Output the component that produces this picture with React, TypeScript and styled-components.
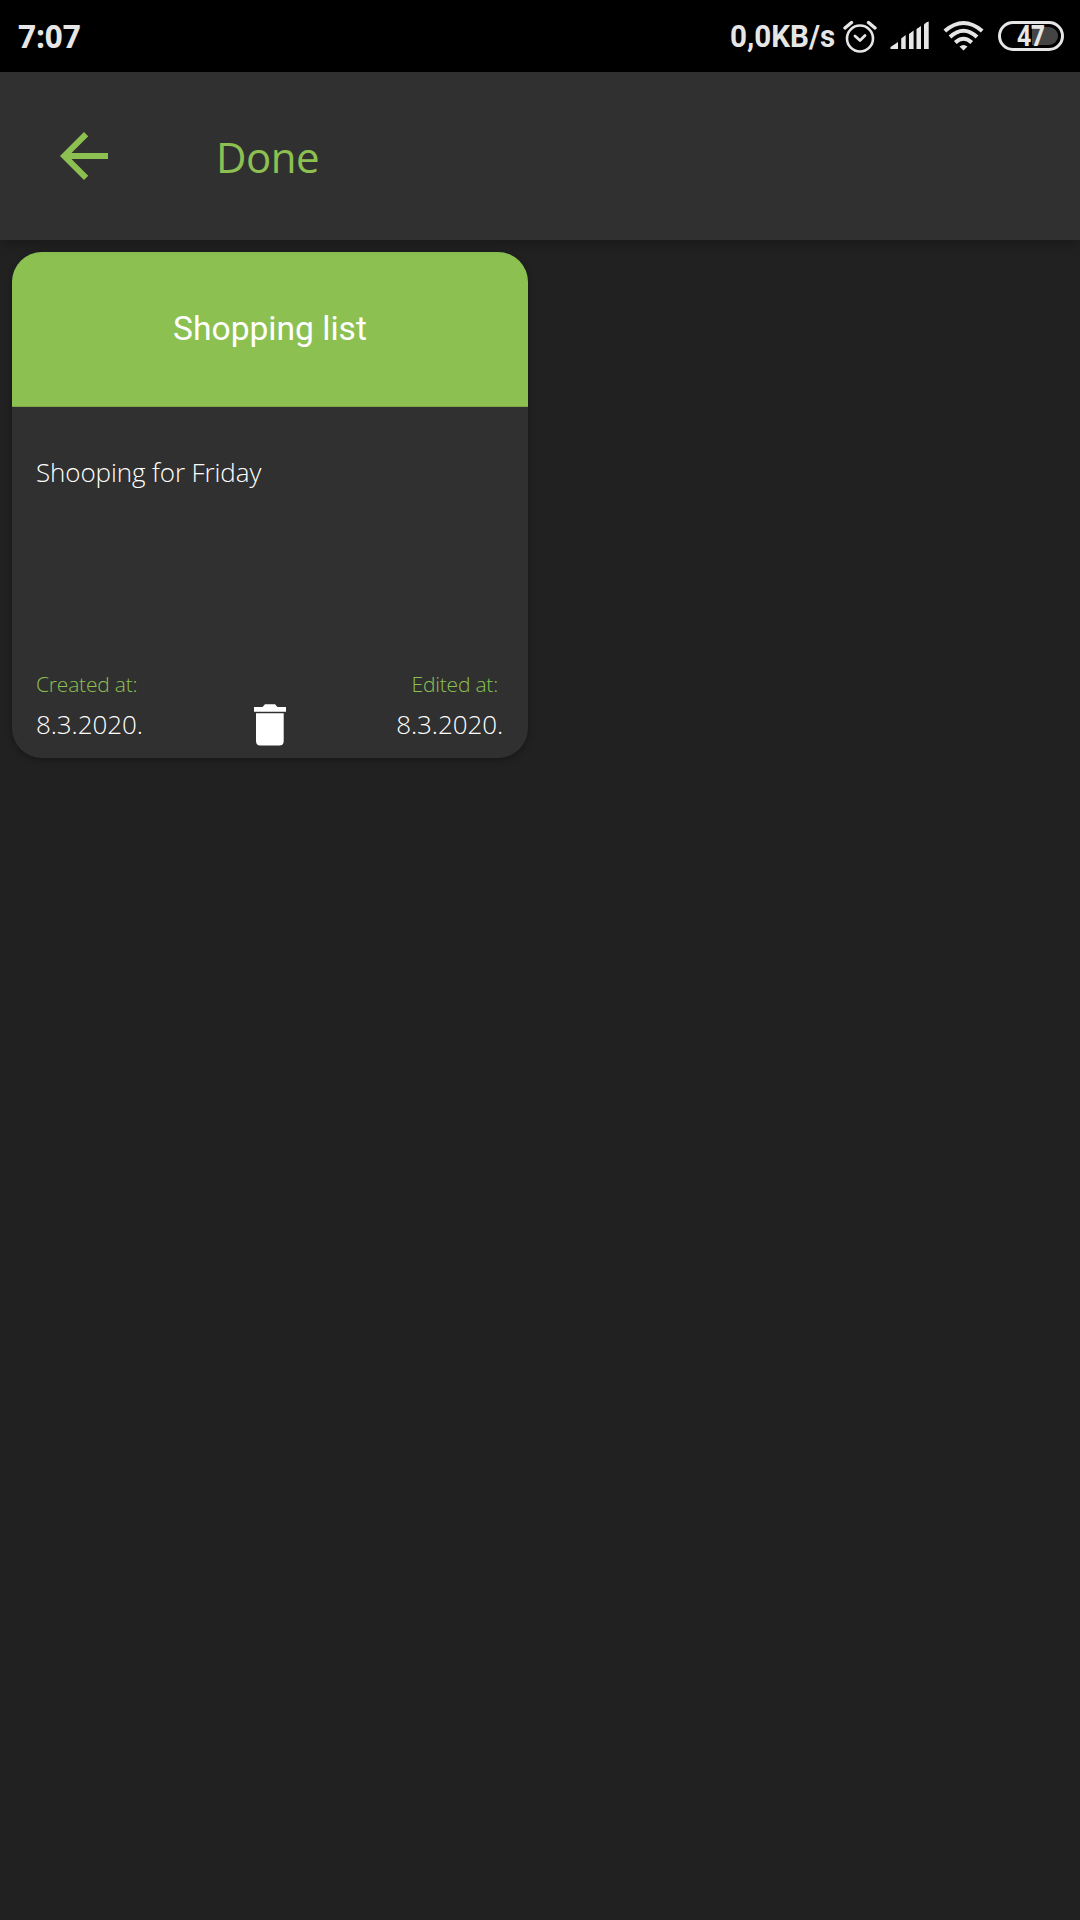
import React from 'react';
import styled, { createGlobalStyle } from 'styled-components';

const GlobalStyle = createGlobalStyle`
  *, *::before, *::after { box-sizing: border-box; }
  body { margin: 0; background: #212121; }
`;

const Screen = styled.div`
  width: 1080px;
  height: 1920px;
  display: flex;
  flex-direction: column;
  overflow: hidden;
  background: #212121;
  font-family: 'Open Sans', 'Noto Sans', sans-serif;
`;

const StatusBar = styled.div`
  flex: none;
  height: 72px;
  display: flex;
  justify-content: space-between;
  padding: 0 16px 0 18px;
  background: #000;
  color: #e6e6e6;
`;

const Clock = styled.span`
  font-weight: 700;
  font-size: 33px;
  line-height: 72px;
  transform: scaleX(0.95);
  transform-origin: left;
`;

const StatusIcons = styled.div`
  display: flex;
  align-items: flex-start;
  padding-top: 20px;
`;

const Speed = styled.span`
  width: 113px;
  margin-top: -20px;
  font: 700 32px/72px Roboto, sans-serif;
  white-space: nowrap;
  transform: scaleX(0.925);
  transform-origin: left;
`;

const Icon = styled.svg<{ $gap?: number }>`
  display: block;
  flex: none;
  margin-left: ${({ $gap = 0 }) => $gap}px;
`;

const Battery = styled.div`
  display: flex;
  align-items: center;
  justify-content: center;
  width: 66px;
  height: 30px;
  margin: 0.5px 0 0 14px;
  border: 3px solid #e6e6e6;
  border-radius: 15px;
  padding: 3px;
`;

const BatteryLevel = styled.div`
  display: flex;
  justify-content: center;
  width: 54px;
  height: 18px;
  border-radius: 9px;
  background: linear-gradient(to right, #000 28px, #444 28px);
`;

const BatteryValue = styled.span`
  font: 700 28px/16px 'Open Sans', sans-serif;
  transform: scaleX(0.86);
`;

const Toolbar = styled.header`
  flex: none;
  position: relative;
  height: 168px;
  display: flex;
  align-items: center;
  padding: 0 48px;
  background: #303030;
  color: #8cc152;
  box-shadow: 0 4px 12px rgba(0, 0, 0, 0.24);
`;

const BackButton = styled.button`
  width: 72px;
  height: 72px;
  padding: 0;
  border: 0;
  background: none;
  color: inherit;
`;

const Title = styled.h1`
  margin: 2px 0 0 96px;
  font-size: 42px;
  font-weight: 400;
  line-height: 60px;
  letter-spacing: -0.5px;
`;

const Grid = styled.main`
  display: grid;
  grid-template-columns: 516px 516px;
  gap: 24px;
  padding: 12px;
`;

const Card = styled.article`
  display: flex;
  flex-direction: column;
  height: 505.5px;
  border-radius: 30px;
  overflow: hidden;
  background: #303030;
  box-shadow: 0 2px 6px rgba(0, 0, 0, 0.3);
`;

const CardHeader = styled.h2`
  flex: none;
  height: 155px;
  margin: 0;
  border-bottom: 1px solid #7da64b;
  background: #8cc152;
  color: #fff;
  text-align: center;
  font: 400 33.6px/153px Roboto, sans-serif;
`;

const Description = styled.p`
  flex: 1;
  margin: 0;
  padding: 45px 24px 0;
  color: #fff;
  font-weight: 300;
  font-size: 26px;
  line-height: 40px;
  letter-spacing: -0.1px;
`;

const CardFooter = styled.footer`
  display: grid;
  grid-template-columns: 1fr 32px 1fr;
  align-items: end;
  padding: 0 24px 11.5px;
`;

const DateBlock = styled.div<{ $end?: boolean }>`
  display: flex;
  flex-direction: column;
  align-items: ${({ $end }) => ($end ? 'flex-end' : 'flex-start')};
  padding: 0 ${({ $end }) => ($end ? 1 : 0)}px 1px 0;
  font-weight: 300;
`;

const DateLabel = styled.span<{ $inset?: number }>`
  margin-right: ${({ $inset = 0 }) => $inset}px;
  color: #8cc152;
  font-size: 21px;
  line-height: 40px;
  letter-spacing: -0.2px;
`;

const DateValue = styled.span`
  color: #fff;
  font-size: 26px;
  line-height: 41px;
  letter-spacing: -0.1px;
`;

export default function App() {
  return (
    <>
      <GlobalStyle />
      <Screen>
        <StatusBar>
          <Clock>7:07</Clock>
          <StatusIcons>
            <Speed>0,0KB/s</Speed>
            <Icon width="34" height="34" viewBox="0 0 34 34" fill="none" stroke="#e6e6e6">
              <circle cx="17" cy="18.5" r="13" strokeWidth="2.6" />
              <path d="M2 8 8.5 2.5M25.500 2.500 32 8" strokeWidth="3.400" strokeLinecap="round" />
              <path d="M12 16 17 20.500 22 15.500" strokeWidth="2.800" strokeLinecap="round" strokeLinejoin="round" />
            </Icon>
            <Icon $gap={13} width="40" height="30" viewBox="0 0 40 30" fill="#e6e6e6">
              <path d="M.5 29V27L8 22V29ZM11.200 29V18.500L15.700 15V29ZM19 29V14L23.600 10.500V29ZM26.500 29V9L31 6V29ZM34 29V4.500Q36 2 38.700 1.500V29Z" />
            </Icon>
            <Icon $gap={13} width="41" height="31" viewBox="0 0 41 31" fill="none" stroke="#e6e6e6" strokeWidth="4">
              <path d="M1.800 11Q20.500-5 39.200 11M7 17Q20.500 4.500 34 17M12.300 22.500Q20.500 15 28.700 22.500" />
              <path d="M16.500 26.500Q20.500 23.500 24.500 26.500L20.500 30.500Z" fill="#e6e6e6" stroke="none" />
            </Icon>
            <Battery>
              <BatteryLevel>
                <BatteryValue>47</BatteryValue>
              </BatteryLevel>
            </Battery>
          </StatusIcons>
        </StatusBar>

        <Toolbar>
          <BackButton aria-label="Back">
            <Icon width="72" height="72" viewBox="0 0 24 24" fill="currentColor">
              <path d="M20 11H7.830l5.590-5.590L12 4l-8 8 8 8 1.410-1.410L7.830 13H20v-2z" />
            </Icon>
          </BackButton>
          <Title>Done</Title>
        </Toolbar>

        <Grid>
          <Card>
            <CardHeader>Shopping list</CardHeader>
            <Description>Shooping for Friday</Description>
            <CardFooter>
              <DateBlock>
                <DateLabel>Created at:</DateLabel>
                <DateValue>8.3.2020.</DateValue>
              </DateBlock>
              <Icon width="32" height="42" viewBox="0 0 32 42" fill="#fff">
                <path d="M0 3H8.500L11 .3H21L23.500 3H32V7.800H0ZM2 9.300H29.700V37Q29.700 41.500 25.200 41.500H6.500Q2 41.500 2 37Z" />
              </Icon>
              <DateBlock $end>
                <DateLabel $inset={5}>Edited at:</DateLabel>
                <DateValue>8.3.2020.</DateValue>
              </DateBlock>
            </CardFooter>
          </Card>
        </Grid>
      </Screen>
    </>
  );
}
